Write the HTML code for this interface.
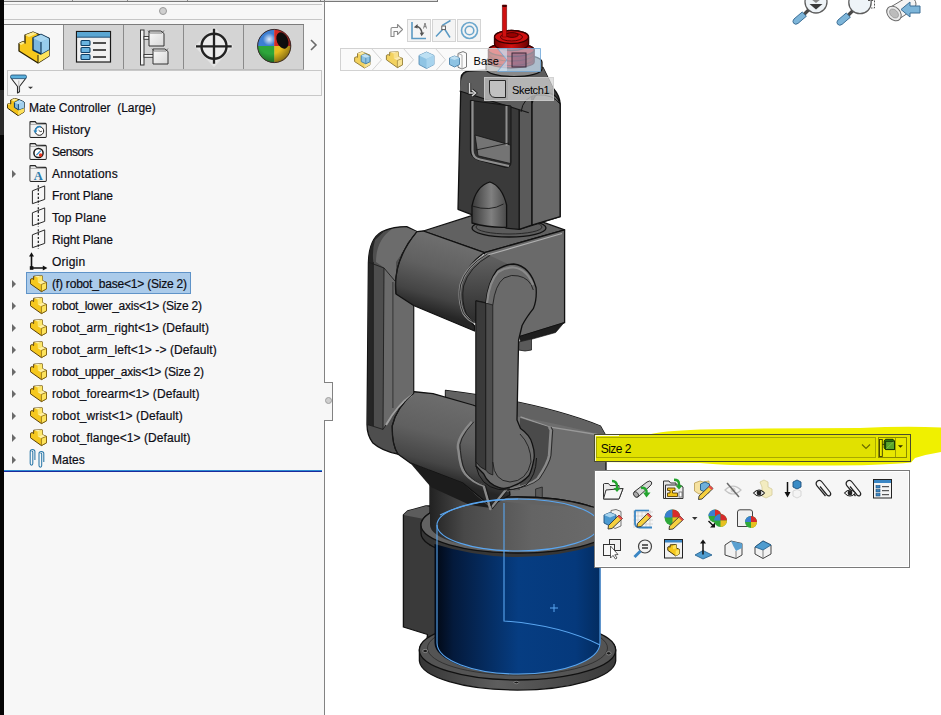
<!DOCTYPE html>
<html><head><meta charset="utf-8">
<style>
*{margin:0;padding:0;box-sizing:border-box}
html,body{width:941px;height:715px;overflow:hidden;background:#fff;font-family:"Liberation Sans",sans-serif}
.a{position:absolute}
#strip{left:0;top:0;width:4px;height:715px;background:#050505}
#panel{left:4px;top:0;width:320px;height:715px;background:#f7f7f7}
#vb{left:324px;top:0;width:1px;height:715px;background:#828282}
.row{position:absolute;left:0;height:22px;font-size:12px;color:#0c0c14;white-space:pre;line-height:22px;-webkit-text-stroke:0.2px #0c0c14}
.tx{position:absolute;top:0}
.exp{position:absolute;left:11px;top:7px;width:0;height:0;border-top:4px solid transparent;border-bottom:4px solid transparent;border-left:4px solid #6b6b6b}
.ico{position:absolute}
</style></head><body>
<div id="strip" class="a"></div>
<div class="a" style="left:0;top:90px;width:4px;height:45px;background:#2a2a2a"></div>
<div id="panel" class="a"></div>
<!-- top bars -->
<div class="a" style="left:4px;top:0;width:434px;height:1px;background:#e2e2e2"></div>
<div class="a" style="left:4px;top:1px;width:434px;height:1px;background:#787878"></div>
<div class="a" style="left:437px;top:0;width:1px;height:2px;background:#787878"></div>
<div class="a" style="left:72px;top:0;width:1px;height:1px;background:#888"></div>
<div class="a" style="left:127px;top:0;width:1px;height:1px;background:#888"></div>
<div class="a" style="left:187px;top:0;width:1px;height:1px;background:#888"></div>
<div class="a" style="left:320px;top:0;width:1px;height:1px;background:#888"></div>
<div class="a" style="left:4px;top:4px;width:318px;height:1px;background:#c6c6c6"></div>
<div class="a" style="left:4px;top:19px;width:318px;height:1px;background:#c6c6c6"></div>
<div class="a" style="left:159px;top:7px;width:8px;height:8px;border-radius:50%;background:#cfcfcf;border:1px solid #9a9a9a"></div>
<!-- tab row -->
<div class="a" style="left:4px;top:24px;width:300px;height:1px;background:#7c7c7c"></div>
<div class="a" style="left:63px;top:25px;width:241px;height:45px;background:#d4d4d4;border-left:1px solid #8a8a8a;border-right:1px solid #8a8a8a;border-bottom:1px solid #bdbdbd"></div>
<div class="a" style="left:123px;top:25px;width:1px;height:44px;background:#8a8a8a"></div>
<div class="a" style="left:183px;top:25px;width:1px;height:44px;background:#8a8a8a"></div>
<div class="a" style="left:243px;top:25px;width:1px;height:44px;background:#8a8a8a"></div>
<!-- chevron -->
<svg class="a" style="left:309px;top:38px" width="10" height="14"><path d="M2 2 L7 7 L2 12" fill="none" stroke="#6a6a6a" stroke-width="1.6"/></svg>
<!-- filter box -->
<div class="a" style="left:7px;top:70px;width:315px;height:26px;border:1px solid #c8c8c8;background:#f7f7f7"></div>

<!-- tree -->
<svg class="a" style="left:7px;top:98px" width="18" height="18" viewBox="0 0 18 18">
<path d="M3.7 2 L7.7 0.4 L12.4 1.8 L17 4 L17 14.1 L11.1 17.6 L0.4 10 L0.4 6.2 L2 5.3 L3.7 6 Z" fill="#f3c21a" stroke="#3a2a00" stroke-width="1" stroke-linejoin="round"/>
<path d="M11.1 12 L17 9.7 L17 14.1 L11.1 17.6 Z" fill="#fde05a"/>
<path d="M3.7 2 L7.7 0.4 L11 1.5 L7 3.2 Z M0.4 6.2 L2 5.3 L3.7 6 L2.2 6.8 Z" fill="#fdeb90"/>
<path d="M7.4 4.4 L12.4 2 L17 4 L17 9.7 L11.4 11.8 L7.4 9.4 Z" fill="#7db5dc" stroke="#0a3a66" stroke-width="1" stroke-linejoin="round"/>
<path d="M7.4 4.4 L12.4 2 L17 4 L11.4 6.2 Z" fill="#b5dcf2"/>
<path d="M11.4 6.2 L17 4 L17 9.7 L11.4 11.8 Z" fill="#a2d0ee"/>
<path d="M11.4 6.2 L11.4 11.8" stroke="#0a3a66" stroke-width="0.9"/>
</svg>
<div class="row" style="left:29px;top:97px;letter-spacing:-0.03px">Mate Controller  (Large)</div>
<svg class="a" style="left:29px;top:121px" width="18" height="18" viewBox="0 0 18 18"><path d="M1 3 L1 1.2 Q1 0.6 1.6 0.6 L6.2 0.6 L7.4 2.2 L16.4 2.4 Q17.2 2.5 17.2 3.3 L17.2 15.6 Q17.2 16.4 16.4 16.4 L1.8 16.4 Q1 16.4 1 15.6 Z" fill="#e9e9e9" stroke="#262626" stroke-width="1.1"/>
<path d="M1.6 3.6 L16.6 3.6" stroke="#9a9a9a" stroke-width="0.8"/>
<rect x="1.6" y="4" width="15" height="11.8" fill="#f2f2f2"/>
<circle cx="10.4" cy="10" r="4.3" fill="#fff" stroke="#1e1e1e" stroke-width="1"/>
<path d="M9.6 9.2 L11.2 10.6 L13 10.2" fill="none" stroke="#1e1e1e" stroke-width="0.8"/>
<path d="M6.5 10.5 A4.2 4.2 0 0 1 12 5.8" fill="none" stroke="#2a86c0" stroke-width="1.6"/>
<path d="M4.4 9.6 L8.4 9.6 L6.4 12.4 Z" fill="#2a86c0"/>
</svg>
<div class="row" style="left:52px;top:119px;letter-spacing:0.14px">History</div>
<svg class="a" style="left:29px;top:143px" width="18" height="18" viewBox="0 0 18 18"><path d="M1 3 L1 1.2 Q1 0.6 1.6 0.6 L6.2 0.6 L7.4 2.2 L16.4 2.4 Q17.2 2.5 17.2 3.3 L17.2 15.6 Q17.2 16.4 16.4 16.4 L1.8 16.4 Q1 16.4 1 15.6 Z" fill="#e9e9e9" stroke="#262626" stroke-width="1.1"/>
<path d="M1.6 3.6 L16.6 3.6" stroke="#9a9a9a" stroke-width="0.8"/>
<rect x="1.6" y="4" width="15" height="11.8" fill="#f2f2f2"/>
<circle cx="9.5" cy="10" r="4.6" fill="#fff" stroke="#151515" stroke-width="1.5"/>
<path d="M7.4 12.2 L11.8 7.6" stroke="#2a86c0" stroke-width="1.2"/>
<circle cx="11.6" cy="12.1" r="1.8" fill="#e8341c"/>
</svg>
<div class="row" style="left:52px;top:141px;letter-spacing:-0.46px">Sensors</div>
<svg class="a" style="left:11px;top:169px" width="6" height="10"><path d="M1 1 L5 5 L1 9 Z" fill="#6a6a6a"/></svg>
<svg class="a" style="left:29px;top:165px" width="18" height="18" viewBox="0 0 18 18"><path d="M1 3 L1 1.2 Q1 0.6 1.6 0.6 L6.2 0.6 L7.4 2.2 L16.4 2.4 Q17.2 2.5 17.2 3.3 L17.2 15.6 Q17.2 16.4 16.4 16.4 L1.8 16.4 Q1 16.4 1 15.6 Z" fill="#e9e9e9" stroke="#262626" stroke-width="1.1"/>
<path d="M1.6 3.6 L16.6 3.6" stroke="#9a9a9a" stroke-width="0.8"/>
<rect x="1.6" y="4" width="15" height="11.8" fill="#f2f2f2"/>
<text x="9.3" y="15.2" text-anchor="middle" font-family="Liberation Serif" font-weight="bold" font-size="12.5" fill="#2a7aaa">A</text>
</svg>
<div class="row" style="left:52px;top:163px;letter-spacing:0.24px">Annotations</div>
<svg class="a" style="left:29px;top:185px" width="19" height="21" viewBox="0 0 19 21">
<path d="M3.4 5.8 L15.7 0.9 L15.7 14.4 L3.4 18.7 Z" fill="#f6f6f6" stroke="#2a2a2a" stroke-width="1"/>
<path d="M9.3 0.3 L9.3 19.8" stroke="#1a1a1a" stroke-width="1.2" stroke-dasharray="2.2 1.6"/>
</svg>
<div class="row" style="left:52px;top:185px;letter-spacing:-0.1px">Front Plane</div>
<svg class="a" style="left:29px;top:207px" width="19" height="21" viewBox="0 0 19 21">
<path d="M3.4 5.8 L15.7 0.9 L15.7 14.4 L3.4 18.7 Z" fill="#f6f6f6" stroke="#2a2a2a" stroke-width="1"/>
<path d="M9.3 0.3 L9.3 19.8" stroke="#1a1a1a" stroke-width="1.2" stroke-dasharray="2.2 1.6"/>
</svg>
<div class="row" style="left:52px;top:207px;letter-spacing:0.09px">Top Plane</div>
<svg class="a" style="left:29px;top:229px" width="19" height="21" viewBox="0 0 19 21">
<path d="M3.4 5.8 L15.7 0.9 L15.7 14.4 L3.4 18.7 Z" fill="#f6f6f6" stroke="#2a2a2a" stroke-width="1"/>
<path d="M9.3 0.3 L9.3 19.8" stroke="#1a1a1a" stroke-width="1.2" stroke-dasharray="2.2 1.6"/>
</svg>
<div class="row" style="left:52px;top:229px;letter-spacing:-0.1px">Right Plane</div>
<svg class="a" style="left:29px;top:252px" width="20" height="20" viewBox="0 0 20 20">
<path d="M2.5 3.5 L2.5 16 L14.5 16" fill="none" stroke="#111" stroke-width="1.6"/>
<path d="M0 4.6 L2.5 0.2 L5 4.6 Z" fill="#111"/>
<path d="M13.8 13.4 L18.4 16 L13.8 18.6 Z" fill="#111"/>
<rect x="0.8" y="14.2" width="3.6" height="3.6" fill="#111"/>
</svg>
<div class="row" style="left:52px;top:251px;letter-spacing:0.23px">Origin</div>
<div class="a" style="left:26px;top:272px;width:165px;height:22px;background:#abcbea;border:1px solid #5f93c8"></div>
<svg class="a" style="left:11px;top:279px" width="6" height="10"><path d="M1 1 L5 5 L1 9 Z" fill="#6a6a6a"/></svg>
<svg class="a" style="left:30px;top:275px" width="18" height="18" viewBox="0 0 18 18">
<path d="M3.7 1.2 L12.2 0.8 L12.6 5.8 L16.5 7.4 L16.5 13.8 L11.4 16.6 L0.4 8.8 L0.4 4.4 L2.2 3.5 L3.6 4.6 Z" fill="#f6c81e" stroke="#5a3f05" stroke-width="1" stroke-linejoin="round"/>
<path d="M7.6 2.4 L12.2 0.8 L12.6 5.8 L7.8 7.3 Z" fill="#fde76a"/>
<path d="M3.7 1.2 L12.2 0.8 L7.6 2.4 Z" fill="#fff3a8"/>
<path d="M7.8 7.3 L12.6 5.8 L16.5 7.4 L11.4 9.4 Z" fill="#fff0a0"/>
<path d="M11.4 9.4 L16.5 7.4 L16.5 13.8 L11.4 16.6 Z" fill="#fde35c" stroke="#7a5a08" stroke-width="0.7"/>
</svg>
<div class="row" style="left:52px;top:273px;letter-spacing:-0.2px">(f) robot_base&lt;1&gt; (Size 2)</div>
<svg class="a" style="left:11px;top:301px" width="6" height="10"><path d="M1 1 L5 5 L1 9 Z" fill="#6a6a6a"/></svg>
<svg class="a" style="left:30px;top:297px" width="18" height="18" viewBox="0 0 18 18">
<path d="M3.7 1.2 L12.2 0.8 L12.6 5.8 L16.5 7.4 L16.5 13.8 L11.4 16.6 L0.4 8.8 L0.4 4.4 L2.2 3.5 L3.6 4.6 Z" fill="#f6c81e" stroke="#5a3f05" stroke-width="1" stroke-linejoin="round"/>
<path d="M7.6 2.4 L12.2 0.8 L12.6 5.8 L7.8 7.3 Z" fill="#fde76a"/>
<path d="M3.7 1.2 L12.2 0.8 L7.6 2.4 Z" fill="#fff3a8"/>
<path d="M7.8 7.3 L12.6 5.8 L16.5 7.4 L11.4 9.4 Z" fill="#fff0a0"/>
<path d="M11.4 9.4 L16.5 7.4 L16.5 13.8 L11.4 16.6 Z" fill="#fde35c" stroke="#7a5a08" stroke-width="0.7"/>
</svg>
<div class="row" style="left:52px;top:295px;letter-spacing:-0.23px">robot_lower_axis&lt;1&gt; (Size 2)</div>
<svg class="a" style="left:11px;top:323px" width="6" height="10"><path d="M1 1 L5 5 L1 9 Z" fill="#6a6a6a"/></svg>
<svg class="a" style="left:30px;top:319px" width="18" height="18" viewBox="0 0 18 18">
<path d="M3.7 1.2 L12.2 0.8 L12.6 5.8 L16.5 7.4 L16.5 13.8 L11.4 16.6 L0.4 8.8 L0.4 4.4 L2.2 3.5 L3.6 4.6 Z" fill="#f6c81e" stroke="#5a3f05" stroke-width="1" stroke-linejoin="round"/>
<path d="M7.6 2.4 L12.2 0.8 L12.6 5.8 L7.8 7.3 Z" fill="#fde76a"/>
<path d="M3.7 1.2 L12.2 0.8 L7.6 2.4 Z" fill="#fff3a8"/>
<path d="M7.8 7.3 L12.6 5.8 L16.5 7.4 L11.4 9.4 Z" fill="#fff0a0"/>
<path d="M11.4 9.4 L16.5 7.4 L16.5 13.8 L11.4 16.6 Z" fill="#fde35c" stroke="#7a5a08" stroke-width="0.7"/>
</svg>
<div class="row" style="left:52px;top:317px;letter-spacing:0.08px">robot_arm_right&lt;1&gt; (Default)</div>
<svg class="a" style="left:11px;top:345px" width="6" height="10"><path d="M1 1 L5 5 L1 9 Z" fill="#6a6a6a"/></svg>
<svg class="a" style="left:30px;top:341px" width="18" height="18" viewBox="0 0 18 18">
<path d="M3.7 1.2 L12.2 0.8 L12.6 5.8 L16.5 7.4 L16.5 13.8 L11.4 16.6 L0.4 8.8 L0.4 4.4 L2.2 3.5 L3.6 4.6 Z" fill="#f6c81e" stroke="#5a3f05" stroke-width="1" stroke-linejoin="round"/>
<path d="M7.6 2.4 L12.2 0.8 L12.6 5.8 L7.8 7.3 Z" fill="#fde76a"/>
<path d="M3.7 1.2 L12.2 0.8 L7.6 2.4 Z" fill="#fff3a8"/>
<path d="M7.8 7.3 L12.6 5.8 L16.5 7.4 L11.4 9.4 Z" fill="#fff0a0"/>
<path d="M11.4 9.4 L16.5 7.4 L16.5 13.8 L11.4 16.6 Z" fill="#fde35c" stroke="#7a5a08" stroke-width="0.7"/>
</svg>
<div class="row" style="left:52px;top:339px;letter-spacing:0.105px">robot_arm_left&lt;1&gt; -&gt; (Default)</div>
<svg class="a" style="left:11px;top:367px" width="6" height="10"><path d="M1 1 L5 5 L1 9 Z" fill="#6a6a6a"/></svg>
<svg class="a" style="left:30px;top:363px" width="18" height="18" viewBox="0 0 18 18">
<path d="M3.7 1.2 L12.2 0.8 L12.6 5.8 L16.5 7.4 L16.5 13.8 L11.4 16.6 L0.4 8.8 L0.4 4.4 L2.2 3.5 L3.6 4.6 Z" fill="#f6c81e" stroke="#5a3f05" stroke-width="1" stroke-linejoin="round"/>
<path d="M7.6 2.4 L12.2 0.8 L12.6 5.8 L7.8 7.3 Z" fill="#fde76a"/>
<path d="M3.7 1.2 L12.2 0.8 L7.6 2.4 Z" fill="#fff3a8"/>
<path d="M7.8 7.3 L12.6 5.8 L16.5 7.4 L11.4 9.4 Z" fill="#fff0a0"/>
<path d="M11.4 9.4 L16.5 7.4 L16.5 13.8 L11.4 16.6 Z" fill="#fde35c" stroke="#7a5a08" stroke-width="0.7"/>
</svg>
<div class="row" style="left:52px;top:361px;letter-spacing:-0.225px">robot_upper_axis&lt;1&gt; (Size 2)</div>
<svg class="a" style="left:11px;top:389px" width="6" height="10"><path d="M1 1 L5 5 L1 9 Z" fill="#6a6a6a"/></svg>
<svg class="a" style="left:30px;top:385px" width="18" height="18" viewBox="0 0 18 18">
<path d="M3.7 1.2 L12.2 0.8 L12.6 5.8 L16.5 7.4 L16.5 13.8 L11.4 16.6 L0.4 8.8 L0.4 4.4 L2.2 3.5 L3.6 4.6 Z" fill="#f6c81e" stroke="#5a3f05" stroke-width="1" stroke-linejoin="round"/>
<path d="M7.6 2.4 L12.2 0.8 L12.6 5.8 L7.8 7.3 Z" fill="#fde76a"/>
<path d="M3.7 1.2 L12.2 0.8 L7.6 2.4 Z" fill="#fff3a8"/>
<path d="M7.8 7.3 L12.6 5.8 L16.5 7.4 L11.4 9.4 Z" fill="#fff0a0"/>
<path d="M11.4 9.4 L16.5 7.4 L16.5 13.8 L11.4 16.6 Z" fill="#fde35c" stroke="#7a5a08" stroke-width="0.7"/>
</svg>
<div class="row" style="left:52px;top:383px;letter-spacing:0.085px">robot_forearm&lt;1&gt; (Default)</div>
<svg class="a" style="left:11px;top:411px" width="6" height="10"><path d="M1 1 L5 5 L1 9 Z" fill="#6a6a6a"/></svg>
<svg class="a" style="left:30px;top:407px" width="18" height="18" viewBox="0 0 18 18">
<path d="M3.7 1.2 L12.2 0.8 L12.6 5.8 L16.5 7.4 L16.5 13.8 L11.4 16.6 L0.4 8.8 L0.4 4.4 L2.2 3.5 L3.6 4.6 Z" fill="#f6c81e" stroke="#5a3f05" stroke-width="1" stroke-linejoin="round"/>
<path d="M7.6 2.4 L12.2 0.8 L12.6 5.8 L7.8 7.3 Z" fill="#fde76a"/>
<path d="M3.7 1.2 L12.2 0.8 L7.6 2.4 Z" fill="#fff3a8"/>
<path d="M7.8 7.3 L12.6 5.8 L16.5 7.4 L11.4 9.4 Z" fill="#fff0a0"/>
<path d="M11.4 9.4 L16.5 7.4 L16.5 13.8 L11.4 16.6 Z" fill="#fde35c" stroke="#7a5a08" stroke-width="0.7"/>
</svg>
<div class="row" style="left:52px;top:405px;letter-spacing:0.09px">robot_wrist&lt;1&gt; (Default)</div>
<svg class="a" style="left:11px;top:433px" width="6" height="10"><path d="M1 1 L5 5 L1 9 Z" fill="#6a6a6a"/></svg>
<svg class="a" style="left:30px;top:429px" width="18" height="18" viewBox="0 0 18 18">
<path d="M3.7 1.2 L12.2 0.8 L12.6 5.8 L16.5 7.4 L16.5 13.8 L11.4 16.6 L0.4 8.8 L0.4 4.4 L2.2 3.5 L3.6 4.6 Z" fill="#f6c81e" stroke="#5a3f05" stroke-width="1" stroke-linejoin="round"/>
<path d="M7.6 2.4 L12.2 0.8 L12.6 5.8 L7.8 7.3 Z" fill="#fde76a"/>
<path d="M3.7 1.2 L12.2 0.8 L7.6 2.4 Z" fill="#fff3a8"/>
<path d="M7.8 7.3 L12.6 5.8 L16.5 7.4 L11.4 9.4 Z" fill="#fff0a0"/>
<path d="M11.4 9.4 L16.5 7.4 L16.5 13.8 L11.4 16.6 Z" fill="#fde35c" stroke="#7a5a08" stroke-width="0.7"/>
</svg>
<div class="row" style="left:52px;top:427px;letter-spacing:0.076px">robot_flange&lt;1&gt; (Default)</div>
<svg class="a" style="left:11px;top:455px" width="6" height="10"><path d="M1 1 L5 5 L1 9 Z" fill="#6a6a6a"/></svg>
<svg class="a" style="left:29px;top:449px" width="18" height="20" viewBox="0 0 18 20">
<g fill="none" stroke="#2a77a8" stroke-width="1.05">
<path d="M5.9 11 L5.9 2.6 Q5.9 0.6 3.6 0.6 Q1.2 0.6 1.2 2.6 L1.2 14.6 Q1.2 16.2 2.6 16.2 Q3.8 16.2 3.8 14.6 L3.8 3.2 Q3.8 2.2 2.7 2.6"/>
<path d="M14.8 13 L14.8 4.6 Q14.8 2.6 12.4 2.6 Q10 2.6 10 4.6 L10 16.6 Q10 18.2 11.4 18.2 Q12.7 18.2 12.7 16.6 L12.7 5.2 Q12.7 4.2 11.6 4.6"/>
</g></svg>
<div class="row" style="left:52px;top:449px;letter-spacing:0px">Mates</div>
<svg class="a" style="left:0;top:0" width="325" height="100" viewBox="0 0 325 100">
<defs>
<radialGradient id="gBall" cx="0.35" cy="0.3" r="0.75">
<stop offset="0" stop-color="#fff" stop-opacity="0.85"/><stop offset="0.25" stop-color="#fff" stop-opacity="0"/>
</radialGradient>
<linearGradient id="gBox" x1="0" y1="0" x2="1" y2="1"><stop offset="0" stop-color="#fafafa"/><stop offset="1" stop-color="#d8d8d8"/></linearGradient>
</defs>
<!-- tab1: assembly feature manager -->
<g transform="translate(18,31)" stroke-linejoin="round">
<path d="M7 4 L15 1 L31 7.5 L31 25 L20 32 L1 20 L1 12.5 L5 10.5 L7 12 Z" fill="#f7c81c" stroke="#2a2000" stroke-width="1.3"/>
<path d="M20 24 L31 18.5 L31 25 L20 32 Z" fill="#fde35a"/>
<path d="M7 4 L15 1 L19 2.6 L11 6 Z" fill="#fdeb8a"/>
<path d="M1 12.5 L5 10.5 L7 12 L3 14 Z" fill="#fdeb8a"/>
<path d="M20 24 L20 32" stroke="#2a2000" stroke-width="1"/>
<path d="M15 7 L23 3.5 L31 7.5 L31 18.5 L23 23 L15 19 Z" fill="#7db7de" stroke="#0a3050" stroke-width="1.4"/>
<path d="M15 7 L23 3.5 L31 7.5 L23 11 Z" fill="#a9d6f0"/>
<path d="M23 11 L31 7.5 L31 18.5 L23 23 Z" fill="#98cdec"/>
<path d="M23 11 L23 23" stroke="#0a3050" stroke-width="1.1"/>
</g>
<!-- tab2: property manager -->
<g transform="translate(76,31)">
<rect x="0.5" y="0.5" width="34" height="30.5" fill="#f0f0f0" stroke="#1a1a1a" stroke-width="1.2"/>
<rect x="1" y="1" width="33" height="5" fill="#5aa6d2"/>
<path d="M1 6.2 L34 6.2" stroke="#1a4a70" stroke-width="1"/>
<rect x="5" y="9.5" width="9" height="5" rx="1" fill="#6ab4e0" stroke="#0e3f66" stroke-width="1.1"/>
<rect x="5" y="16.5" width="9" height="5" rx="1" fill="#6ab4e0" stroke="#0e3f66" stroke-width="1.1"/>
<rect x="5" y="23.5" width="9" height="5" rx="1" fill="#6ab4e0" stroke="#0e3f66" stroke-width="1.1"/>
<path d="M17 12 L30 12 M17 19 L30 19 M17 26 L30 26" stroke="#1a1a1a" stroke-width="1.6"/>
</g>
<!-- tab3: configuration manager -->
<g transform="translate(140,29.5)">
<rect x="0.5" y="0.5" width="3.5" height="35" fill="#f4f4f4" stroke="#333" stroke-width="1"/>
<rect x="4" y="7" width="5" height="2.8" fill="#f4f4f4" stroke="#333" stroke-width="0.9"/>
<rect x="4" y="25" width="10" height="2.8" fill="#f4f4f4" stroke="#333" stroke-width="0.9"/>
<path d="M9 1.5 L21 1.5 L24 4 L24 16.5 L9 16.5 Z" fill="url(#gBox)" stroke="#333" stroke-width="1"/>
<path d="M8 1 L10 3.5 L22 3.5 L24 1" fill="none" stroke="#333" stroke-width="0.6"/>
<path d="M13 19.5 L25 19.5 L28 22 L28 34.5 L13 34.5 Z" fill="url(#gBox)" stroke="#333" stroke-width="1"/>
<path d="M12 19 L14 21.5 L26 21.5 L28 19" fill="none" stroke="#333" stroke-width="0.6"/>
</g>
<!-- tab4: dimxpert crosshair -->
<g transform="translate(214,46.3)">
<path d="M0 -19.5 L19.5 0 L0 21 L-19.5 0 Z" fill="#e4e4e4"/>
<path d="M0 -17 L17 0 L0 18.5 L-17 0 Z" fill="#ebebeb"/>
<circle r="12.5" fill="#ececec" stroke="#222" stroke-width="2.4"/>
<path d="M-18 0 L17.7 0 M0 -17.5 L0 17.5" stroke="#222" stroke-width="2.3"/>
</g>
<!-- tab5: display manager ball -->
<defs>
<radialGradient id="gShade" cx="0.4" cy="0.35" r="0.7">
<stop offset="0.55" stop-color="#000" stop-opacity="0"/><stop offset="1" stop-color="#000" stop-opacity="0.45"/>
</radialGradient>
</defs>
<g transform="translate(274.2,46)">
<path d="M0 0 L-16.8 0 A16.8 16.8 0 0 1 0 -16.8 Z" fill="#3d7fd2"/>
<path d="M0 0 L0 -16.8 A16.8 16.8 0 0 1 16.8 0 Z" fill="#d42a24"/>
<path d="M0 0 L16.8 0 A16.8 16.8 0 0 1 0 16.8 Z" fill="#e6bc1e"/>
<path d="M0 0 L-16.8 0 A16.8 16.8 0 0 0 0 16.8 Z" fill="#2ea63a"/>
<ellipse cx="8.2" cy="-5.5" rx="5.6" ry="8.6" transform="rotate(-22 8.2 -5.5)" fill="#0e0e0e"/>
<circle r="16.8" fill="url(#gShade)"/>
<circle r="16.8" fill="url(#gBall)"/>
<circle r="16.6" fill="none" stroke="#3a2a2a" stroke-width="1"/>
</g>
<!-- filter -->
<g transform="translate(10,74.5)">
<path d="M1 3.5 L7.5 12 L7.5 18.5 L9.5 17.2 L9.5 12 L16 3.5" fill="#f4f4f4" stroke="#2a2a2a" stroke-width="1.1" stroke-linejoin="round"/>
<path d="M8.8 6 L8.8 16" stroke="#b8b8b8" stroke-width="1"/>
<rect x="0.5" y="0.5" width="16" height="3.6" rx="1.6" fill="#5ab0dc" stroke="#1a4a70" stroke-width="0.8"/>
<path d="M18 12.2 L23 12.2 L20.5 14.6 Z" fill="#3a3a3a"/>
</g>
</svg>


<!-- bottom line -->
<div class="a" style="left:4px;top:470px;width:318px;height:1px;background:#2f8ad2"></div>
<div class="a" style="left:4px;top:471px;width:318px;height:1px;background:#1c2a9c"></div>

<div id="vb" class="a"></div>
<!-- splitter handle -->
<div class="a" style="left:324px;top:382px;width:9px;height:39px;background:#f7f7f7;border:1px solid #828282;border-left:none"></div>
<div class="a" style="left:325px;top:397px;width:7px;height:7px;border-radius:50%;background:#cfcfcf;border:1px solid #a0a0a0"></div>

<svg class="a" style="left:0;top:0" width="941" height="715" viewBox="0 0 941 715">
<defs>
<linearGradient id="gBlue" x1="437" y1="0" x2="600" y2="0" gradientUnits="userSpaceOnUse">
 <stop offset="0" stop-color="#020a18"/><stop offset="0.1" stop-color="#041a3c"/><stop offset="0.5" stop-color="#063d82"/><stop offset="0.85" stop-color="#05397c"/><stop offset="1" stop-color="#032c60"/>
</linearGradient>
<linearGradient id="gCol" x1="430" y1="0" x2="600" y2="0" gradientUnits="userSpaceOnUse">
 <stop offset="0" stop-color="#222"/><stop offset="0.2" stop-color="#484848"/><stop offset="0.6" stop-color="#646464"/><stop offset="1" stop-color="#6a6a6a"/>
</linearGradient>
<linearGradient id="gUpHub" x1="445" y1="240" x2="425" y2="310" gradientUnits="userSpaceOnUse">
 <stop offset="0" stop-color="#6e6e6e"/><stop offset="0.4" stop-color="#606060"/><stop offset="0.78" stop-color="#444"/><stop offset="1" stop-color="#262626"/>
</linearGradient>
<linearGradient id="gLoHub" x1="440" y1="398" x2="420" y2="475" gradientUnits="userSpaceOnUse">
 <stop offset="0" stop-color="#6c6c6c"/><stop offset="0.45" stop-color="#606060"/><stop offset="0.8" stop-color="#464646"/><stop offset="1" stop-color="#262626"/>
</linearGradient>
<linearGradient id="gFl" x1="419" y1="0" x2="616" y2="0" gradientUnits="userSpaceOnUse">
 <stop offset="0" stop-color="#353535"/><stop offset="0.4" stop-color="#5e5e5e"/><stop offset="1" stop-color="#3a3a3a"/>
</linearGradient>
<linearGradient id="gNose" x1="472" y1="0" x2="507" y2="0" gradientUnits="userSpaceOnUse">
 <stop offset="0" stop-color="#3a3a3a"/><stop offset="0.55" stop-color="#808080"/><stop offset="1" stop-color="#484848"/>
</linearGradient>
<linearGradient id="gRed" x1="0" y1="0" x2="1" y2="0">
 <stop offset="0" stop-color="#7a0000"/><stop offset="0.5" stop-color="#d01010"/><stop offset="1" stop-color="#6a0000"/>
</linearGradient>
<linearGradient id="gArmL" x1="368" y1="0" x2="414" y2="0" gradientUnits="userSpaceOnUse">
 <stop offset="0" stop-color="#383838"/><stop offset="0.3" stop-color="#505050"/><stop offset="1" stop-color="#5a5a5a"/>
</linearGradient>
<linearGradient id="gEnd" x1="470" y1="260" x2="470" y2="325" gradientUnits="userSpaceOnUse">
 <stop offset="0" stop-color="#5e5e5e"/><stop offset="1" stop-color="#2a2a2a"/>
</linearGradient>
</defs>
<g stroke="#111" stroke-width="1.3" stroke-linejoin="round">
<!-- L1 left block -->
<path d="M403.4 515 L407.6 511 L426 506 L470 506 L470 645 L426.4 645 L427.5 634.5 L403.4 627 Z" fill="#3a3a3a"/>
<path d="M403.4 515 L407.6 511 L426 506 L446 511 L424 519 Z" fill="#5c5c5c" stroke="none"/>
<!-- L2 flange -->
<path d="M419.4 650 A98.2 30 0 0 1 615.7 650 L615.7 661 A98.2 30 0 0 1 419.4 661 Z" fill="url(#gFl)"/>
<ellipse cx="517.5" cy="650" rx="98.2" ry="30" fill="#545454"/>
<ellipse cx="517.5" cy="648" rx="90" ry="27" fill="none" stroke="#2a2a2a" stroke-width="0.8"/>
<ellipse cx="425.2" cy="651" rx="2.4" ry="1.6" fill="#1a1a1a" stroke="#aaa" stroke-width="0.6"/>
<ellipse cx="608.7" cy="653.3" rx="2.4" ry="1.6" fill="#1a1a1a" stroke="#aaa" stroke-width="0.6"/>
<ellipse cx="516.4" cy="682.5" rx="2.4" ry="1.2" fill="#1a1a1a" stroke="#aaa" stroke-width="0.6"/>
<!-- L3 column back -->
<path d="M430 440 L606 440 L606 545 L430 545 Z" fill="url(#gCol)" stroke="none"/>
<!-- L5 shoulder housing -->
<path d="M445.5 390.5 Q540 402 600.4 426 L606 436 L606 545 L430 545 L430 480 L445 470 Z" fill="#6e6e6e"/>
<path d="M445.5 390.5 Q540 402 600.4 426 L606 436 Q560 424 520 417 L446 404 Z" fill="#626262" stroke="none"/>
<path d="M520.5 416.8 L549 426.9 L606 436" fill="none" stroke="#999" stroke-width="1.4"/>
<path d="M535.6 489 L542.3 487 L542.3 545 L535.6 545 Z" fill="#5a5a5a" stroke="#222" stroke-width="0.8"/>
<!-- shoulder ring -->
<path d="M421 525 A97 28 0 0 1 615 525 L615 533 A97 28 0 0 1 421 533 Z" fill="#363636"/>
<ellipse cx="518" cy="525" rx="97" ry="28" fill="#626262"/>
<path d="M430 520 L430 485 Q470 500 540 505 L600 508 L600 525 A82 24 0 0 1 430 525 Z" fill="url(#gCol)" stroke="none"/>
<!-- L4 blue cylinder -->
<path d="M434.5 544 Q518 570 600.6 544 L600.6 643 A83 31 0 0 1 434.5 643 Z" fill="url(#gBlue)" stroke="none"/>
<!-- L6 lower hub -->
<path d="M412 391.5 L433 393.6 L472.8 405 L500 415 L510 495 L490.6 505.8 L462.3 482.8 L410 462.8 L397.8 454 Q391 445 391.2 426 Q394 405 412 391.5 Z" fill="url(#gLoHub)"/>

<path d="M410 462.8 L462.3 482.8 L490.6 508 L470 505 L430.8 487 Z" fill="#1c1c1c" stroke="none"/>
<!-- lower ring right part -->
<path d="M505.4 490.6 Q530 485 537.3 479 Q549 462 549 455.4 L550.7 430.2 L549 426.9 L520 418 L520 490 Z" fill="#4a4a4a" stroke="none"/>
<path d="M471.8 421.8 Q455 440 458.4 450.4 Q460 468 465.1 473.8 Q472 482 483.6 485.6 L490.3 509 L505.4 490.6 Q528 487 537.3 479 Q548 463 549 455.4 L550.7 430.2 L549 426.9" fill="none" stroke="#8a8a8a" stroke-width="2.4"/>
<path d="M471.8 421.8 Q455 440 458.4 450.4 Q460 468 465.1 473.8 Q472 482 483.6 485.6 L490.3 509 L505.4 490.6 Q528 487 537.3 479 Q548 463 549 455.4 L550.7 430.2 L549 426.9" fill="none" stroke="#161616" stroke-width="0.8" transform="translate(2,0)"/>
<!-- L7 left arm -->
<path d="M368.4 263 Q369 236 385 230.4 Q393 226.8 406.7 226.6 L416.9 231.7 L413.6 305.5 L413.6 393 Q396 408 392.2 426 Q392 445 397.8 454 Q382 451 372.6 442.7 Q367 435 367 424.5 Z" fill="#4e4e4e"/>
<path d="M368.4 263 Q369 236 385 230.4 L375 240 Q372 250 373.3 262 L373.3 426 L367.5 425 Z" fill="#262626" stroke="none"/>
<path d="M376 262 Q376 240 392 229 Q400 227 406.7 227.5 L416.9 231.7 L396 262 L396 290 L384.5 268 Z" fill="#6c6c6c" stroke="none"/>
<path d="M384 268 L413.6 303 L413.6 393.8 Q396 408 383 429.4 Z" fill="#6a6a6a" stroke="#1e1e1e" stroke-width="0.9"/>
<path d="M392.9 282 L392.9 408" fill="none" stroke="#262626" stroke-width="0.8"/>
<path d="M373.3 262 L373.3 426 M368 262 L384 268 M367.5 424.5 L383 429.4" fill="none" stroke="#1e1e1e" stroke-width="0.9"/>
<path d="M412 395 Q398 404 386 425" fill="none" stroke="#a0a0a0" stroke-width="2"/>
<path d="M414 393 Q396 408 392.2 426 Q392 445 397.8 454" fill="none" stroke="#1a1a1a" stroke-width="1"/>
<!-- L8 forearm block -->
<path d="M423.3 231 L471.7 215.7 L503.6 208 L564.6 229.9 L484.5 252.7 Z" fill="#616161"/>
<path d="M484.5 252.7 L564.6 229.9 L564.6 322.7 L519.3 336.7 L484.5 348 Z" fill="#6a6a6a"/>
<path d="M486 255.5 L562 233.5" stroke="#b0b0b0" stroke-width="1.1" fill="none"/>
<path d="M519.3 336.7 L564 322.7 L555.7 332.5 L520.7 342.3 Z" fill="#1e1e1e" stroke="#111" stroke-width="0.6"/>
<path d="M518.6 342 L531.5 339 L531.5 350 Q525 352 518.6 350 Z" fill="#5a5a5a" stroke="#222" stroke-width="0.8"/>
<!-- upper hub cylinder -->
<path d="M416.9 231.7 L423.3 231 L484.5 252.7 Q470 262 462 280 Q458 300 463.4 313 L474.6 326 L474.6 331 L413.6 305.5 L396 294 Q392 262 416.9 231.7 Z" fill="url(#gUpHub)"/>
<path d="M416.9 231.7 Q398 252 395.5 280 L396 294" fill="none" stroke="#1a1a1a" stroke-width="1"/>
<!-- hub end face inside ring -->
<path d="M487.2 254.2 Q466 266 460.6 285 Q458 300 463.4 313 Q468 320 476 323 L476 301 L486 303 Q490 272 510 265 Z" fill="url(#gEnd)" stroke="none"/>
<path d="M487.2 254.2 Q466 266 460.6 285 Q458 300 463.4 313 Q468 320 474.6 322.7" fill="none" stroke="#8e8e8e" stroke-width="2.6"/>
<path d="M487.2 254.2 Q466 266 460.6 285 Q458 300 463.4 313 Q468 320 474.6 322.7" fill="none" stroke="#141414" stroke-width="0.8" transform="translate(3,1)"/>
<path d="M487.2 254.2 Q466 266 460.6 285 Q458 300 463.4 313 Q468 320 474.6 322.7" fill="none" stroke="#141414" stroke-width="0.8"/>
<!-- L9 right arm -->
<path d="M476 301 L485.8 303 Q488 282 497 270 Q505 264 513.7 264 Q530 266 536.1 287.8 Q537 300 533.3 308.7 Q526 318 522.1 325.5 L518.6 340 L517 420 L520.5 428.5 Q530 435 532.2 443.6 Q535 452 534 458.7 Q532 470 529 475.5 Q522 483 513.8 485.6 Q505 490 498.7 487.3 Q488 484 483.6 473.8 L476 466 Z" fill="#6a6a6a"/>
<path d="M476 301 L485.8 303 L485.8 470 Q480 468 476 462 Z" fill="#3a3a3a" stroke="#141414" stroke-width="0.8"/>
<path d="M485.8 303 L492.8 305 L492.8 475 Q488 474 485.8 470 Z" fill="#4c4c4c" stroke="#141414" stroke-width="0.7"/>
<path d="M492.8 305 Q495 285 504 278 Q512 274 518 275.9 Q530 278 533.3 290" fill="none" stroke="#141414" stroke-width="0.8"/>
<path d="M487 303 Q489 282 498 272 Q506 267 513.7 267.5 Q527 269 533 285" fill="none" stroke="#8a8a8a" stroke-width="2.2"/>
<path d="M492.8 462 Q494 481 510 482 Q527 481 531 462 Q531 445 520 434" fill="none" stroke="#141414" stroke-width="0.8"/>
<path d="M476 466 Q480 486 498.7 489.5 Q515 491 526 485 Q536 476 536.5 458" fill="none" stroke="#141414" stroke-width="1"/>
<!-- nose ring -->
<ellipse cx="509" cy="228" rx="37" ry="9" fill="#5c5c5c"/>
<ellipse cx="509" cy="227" rx="33" ry="7" fill="none" stroke="#1a1a1a" stroke-width="0.8"/>
<!-- L10 wrist -->
<path d="M461 78 Q462 71 470 71 L543 67.5 L553 88 Q560 96 560.1 104 L560.1 216.7 L519.2 229.3 L506.6 228.2 L458 209.3 Z" fill="#3a3a3a"/>
<path d="M531.8 104 Q534 92 545 92 Q558 94 560.1 104 L560.1 216.7 L531.8 225 Z" fill="#686868"/>
<path d="M519.2 100 Q521 92 531.8 92 L531.8 225 L519.2 229.3 Z" fill="#5a5a5a"/>
<path d="M460 91 Q460 74 468 72 L543 67.5 L553 88 Q548 92 540 93 Q524 96 521 109.6 L528.8 112.7 Z" fill="#5c5c5c" stroke="none"/>
<path d="M459.6 91 L528.8 112.7" fill="none" stroke="#141414" stroke-width="1.1"/>
<path d="M521 112 Q523 97 537 95 Q553 94 560 104" fill="none" stroke="#141414" stroke-width="1"/>
<path d="M470.4 100.4 L511 106 L511 162 Q511 168 505 167.3 L478 160 Q470.4 157 470.4 150 Z" fill="#2e2e2e" stroke="#141414" stroke-width="1"/>
<path d="M475 135 L510.4 145 L510.4 163.5 L478 155.8 Z" fill="#747474" stroke="#141414" stroke-width="0.8"/>
<path d="M472.5 101 L472.5 150 Q472.5 158 480 159.5 L509 166" fill="none" stroke="#8e8e8e" stroke-width="2.2"/>
<path d="M506.5 106 L506.5 146" fill="none" stroke="#8e8e8e" stroke-width="2"/>
<path d="M476 150 L509 143" fill="none" stroke="#141414" stroke-width="0.8"/>
<!-- nose ring + cone -->
<path d="M472 223 L472 206 Q476 186 489.9 182 Q502 186 506.6 205 L506.6 227.2 Q490 228 472 223 Z" fill="url(#gNose)"/>
<path d="M472 206 Q490 212 503.5 204" fill="none" stroke="#1a1a1a" stroke-width="0.9"/>
<!-- L11 red flange -->
<path d="M486 62 A28 8 0 0 1 542 62 L542 69 A28 7.5 0 0 1 486 69 Z" fill="#8a8a8a" stroke="#111" stroke-width="1.2"/>
<path d="M488.4 50 A22.9 7 0 0 1 534.2 50 L534.2 62 A22.9 6 0 0 1 488.4 62 Z" fill="url(#gRed)" stroke="#3a0000"/>
<path d="M488.6 55 A22.9 7 0 0 0 534 55 M488.6 59.5 A22.9 7 0 0 0 534 59.5" fill="none" stroke="#4a0000" stroke-width="1"/>
<ellipse cx="511.3" cy="50" rx="22.9" ry="6.5" fill="#c80c0c" stroke="#3a0000"/>
<path d="M494.5 37 A17 6.5 0 0 1 528.6 37 L528.6 44 A17 6.5 0 0 1 494.5 44 Z" fill="url(#gRed)" stroke="#3a0000"/>
<ellipse cx="511.5" cy="37" rx="17" ry="6.5" fill="#d01010" stroke="#3a0000"/>
<ellipse cx="511.5" cy="37" rx="11" ry="4" fill="none" stroke="#4a0000" stroke-width="0.9"/>
<ellipse cx="512" cy="35" rx="6.3" ry="2.4" fill="#9a0000" stroke="#3a0000" stroke-width="0.8"/>
<rect x="502.4" y="5" width="4.2" height="32" fill="#d01010" stroke="#6a0000" stroke-width="0.6"/>
<rect x="502.4" y="5" width="4.2" height="2" fill="#400" stroke="none"/>
</g>
<!-- sketch lines -->
<g fill="none" stroke="#5aa6f0" stroke-width="1.1">
<ellipse cx="518" cy="525" rx="81" ry="26"/>
<path d="M437 525 L437 643 A81.5 31 0 0 0 600 643 L600 525"/>
<path d="M504 503 L504 621 Q560 625 600 645"/>
<path d="M440 515 Q470 500 518 499"/>
</g>
<path d="M550 608 L558 608 M554 604 L554 612" stroke="#5aa6f0" stroke-width="1"/>
</svg>

<!-- context toolbar -->
<svg class="a" style="left:388px;top:22px" width="16" height="16" viewBox="0 0 16 16">
<path d="M3 14.5 L3 7 Q3 5.5 4.5 5.5 L9.5 5.5 L9.5 2.5 L14.5 7.5 L9.5 12.5 L9.5 9.5 L6 9.5 L6 14.5 Z" fill="#fafafa" stroke="#8a8a8a" stroke-width="1.1" stroke-linejoin="round"/>
</svg>
<div class="a" style="left:407px;top:19px;width:24px;height:23px;border:1px solid #d4d4d4;background:#f4f4f4"></div>
<div class="a" style="left:432px;top:19px;width:24px;height:23px;border:1px solid #d4d4d4;background:#f4f4f4"></div>
<div class="a" style="left:457px;top:19px;width:24px;height:23px;border:1px solid #d4d4d4;background:#f4f4f4"></div>
<svg class="a" style="left:407px;top:19px" width="75" height="23" viewBox="0 0 75 23">
<path d="M5 3 L5 19.5 L19 19.5" fill="none" stroke="#5b9ac4" stroke-width="1.6"/>
<path d="M9 7 Q14 8 15 14" fill="none" stroke="#555" stroke-width="1.5"/>
<path d="M6.8 8.2 L10.6 5 L10.6 9.6 Z M12.8 13.8 L17.4 13.4 L14.6 17.2 Z" fill="#555"/>
<path d="M16.5 9.5 L18 4 L19.5 9.5 M17 7.6 L19 7.6" fill="none" stroke="#777" stroke-width="0.9"/>
<path d="M29 17.5 L37 9 L43 18.5 M35.3 6.3 L43.5 1.5" fill="none" stroke="#5b9ac4" stroke-width="1.5"/>
<rect x="34.8" y="7" width="3.6" height="3.6" fill="#fff" stroke="#555" stroke-width="0.9"/>
<circle cx="62.5" cy="11.5" r="8" fill="none" stroke="#6aa6cc" stroke-width="1.6"/>
<circle cx="62.5" cy="11.5" r="4.3" fill="none" stroke="#6aa6cc" stroke-width="1.6"/>
</svg>
<!-- breadcrumb -->
<div class="a" style="left:340px;top:48px;width:167px;height:23px;border:1px solid rgba(200,200,200,0.8);border-right:none;background:rgba(246,246,246,0.6)"></div>
<svg class="a" style="left:340px;top:48px" width="205" height="25" viewBox="0 0 205 25">
<path d="M31.5 0.5 L41.5 11.8 L31.5 23" fill="none" stroke="#d4d4d4" stroke-width="1"/>
<path d="M63.5 0.5 L73.5 11.8 L63.5 23" fill="none" stroke="#d4d4d4" stroke-width="1"/>
<path d="M95.5 0.5 L105.5 11.8 L95.5 23" fill="none" stroke="#d4d4d4" stroke-width="1"/>
<!-- asm icon -->
<g transform="translate(14,3)">
<path d="M3.5 2.5 L8 0.8 L16 4.2 L16 13.8 L10.5 17 L0.6 10.6 L0.6 6.6 L2.4 5.8 L3.5 6.4 Z" fill="#f3d25e" stroke="#8a7430" stroke-width="0.9" stroke-linejoin="round"/>
<path d="M10.5 12.5 L16 9.8 L16 13.8 L10.5 17 Z" fill="#f9e392"/>
<path d="M3.5 2.5 L8 0.8 L11 2 L6.5 3.8 Z" fill="#fbeaa8"/>
<path d="M7.2 4.6 L11.2 3 L16 5.2 L16 10.8 L11.8 12.8 L7.2 10.6 Z" fill="#8cc2e2" stroke="#3f7aa6" stroke-width="0.9" stroke-linejoin="round"/>
<path d="M7.2 4.6 L11.2 3 L16 5.2 L11.8 6.8 Z" fill="#c3e2f3"/>
<path d="M11.8 6.8 L11.8 12.8" stroke="#3f7aa6" stroke-width="0.7"/>
</g>
<g transform="translate(46,3)">
<path d="M3.7 1.2 L12.2 0.8 L12.6 5.8 L16.5 7.4 L16.5 13.8 L11.4 16.6 L0.4 8.8 L0.4 4.4 L2.2 3.5 L3.6 4.6 Z" fill="#f3d25e" stroke="#8a7430" stroke-width="0.9" stroke-linejoin="round"/>
<path d="M7.6 2.4 L12.2 0.8 L12.6 5.8 L7.8 7.3 Z" fill="#f8e08a"/>
<path d="M3.7 1.2 L12.2 0.8 L7.6 2.4 Z M7.8 7.3 L12.6 5.8 L16.5 7.4 L11.4 9.4 Z" fill="#fbeab0"/>
<path d="M11.4 9.4 L16.5 7.4 L16.5 13.8 L11.4 16.6 Z" fill="#f8e392" stroke="#8a7430" stroke-width="0.6"/>
</g>
<g transform="translate(78,3)">
<path d="M1 4.5 L8.5 1 L16 4.5 L16 13.5 L8.5 17.5 L1 13.5 Z" fill="#8fc4e4" stroke="#5a8fb5" stroke-width="0.9" stroke-linejoin="round"/>
<path d="M1 4.5 L8.5 1 L16 4.5 L8.5 8 Z" fill="#bde0f3"/>
<path d="M8.5 8 L16 4.5 L16 13.5 L8.5 17.5 Z" fill="#a8d4ee"/>
</g>
<g transform="translate(108,3)">
<path d="M10 2.5 L15 0.6 L18.5 2.2 L18.5 16 L14 18 L10 16.2 Z" fill="#fbfbfb" stroke="#6a6a6a" stroke-width="0.9" stroke-linejoin="round"/>
<path d="M10 2.5 L14 4 L14 18" fill="none" stroke="#9a9a9a" stroke-width="0.8"/>
<path d="M1.5 7 L6.5 5 L11.5 7 L11.5 13.5 L6.5 16 L1.5 13.5 Z" fill="#8ec3e3" stroke="#4a80a8" stroke-width="0.9" stroke-linejoin="round"/>
<path d="M1.5 7 L6.5 5 L11.5 7 L6.5 9 Z" fill="#c0e0f2"/>
</g>
</svg>
<div class="a" style="left:473.5px;top:55px;font-size:11px;color:#000;letter-spacing:0.1px">Base</div>
<!-- highlighted crumb -->
<svg class="a" style="left:496px;top:47px" width="47" height="26" viewBox="0 0 47 26">
<path d="M1.5 1.5 L44.5 1.5 L44.5 24.5 L1.5 24.5 L11 13 Z" fill="rgba(195,222,245,0.62)" stroke="rgba(110,165,215,0.8)" stroke-width="1"/>
<rect x="16" y="6" width="14" height="14" fill="rgba(110,70,110,0.35)" stroke="#3a2838" stroke-width="1"/>
</svg>
<!-- sketch1 -->
<div class="a" style="left:484px;top:77px;width:70px;height:24px;background:rgba(215,215,215,0.72);border:1px solid rgba(205,205,205,0.7)"></div>
<div class="a" style="left:485px;top:78px;width:23px;height:22px;background:rgba(150,150,150,0.35)"></div>
<svg class="a" style="left:464px;top:78px" width="46" height="22" viewBox="0 0 46 22">
<path d="M5.5 5 L5.5 15 L9.5 15 M8 12 L11.5 15 L8 18" fill="none" stroke="#222" stroke-width="3.2"/>
<path d="M5.5 5 L5.5 15 L9.5 15 M8 12 L11.5 15 L8 18" fill="none" stroke="#d8d8d8" stroke-width="1.6"/>
<path d="M25.5 2.5 L41.5 2.5 L41.5 19.5 L31 19.5 Q25.5 19 25.5 13 Z" fill="rgba(195,195,195,0.9)" stroke="#2a2a2a" stroke-width="1"/>
</svg>
<div class="a" style="left:512px;top:83.5px;font-size:11px;color:#000;letter-spacing:-0.35px">Sketch1</div>
<!-- top right icons -->
<svg class="a" style="left:780px;top:0" width="161" height="30" viewBox="780 0 161 30">
<circle cx="816" cy="2" r="11" fill="#eef3f7" stroke="#5e5e5e" stroke-width="1.3"/>
<path d="M809.5 4 L822.5 4 L816 9.5 Z" fill="#3a3a3a"/>
<path d="M811 -1 L821 -1 L816 3 Z" fill="#888"/>
<path d="M808.5 10 L804 14.5" stroke="#4a4a4a" stroke-width="3.2"/>
<path d="M802.2 12 L806.4 16.2 L798 23.4 Q795.5 25.2 793.6 23.2 Q792 21.2 794 19 Z" fill="#7db5d9" stroke="#3d6f96" stroke-width="1"/>
<circle cx="860" cy="2.5" r="11.2" fill="#eef4f8" stroke="#5e5e5e" stroke-width="1.3"/>
<path d="M852.5 11 L848 15.5" stroke="#4a4a4a" stroke-width="3.2"/>
<path d="M846.2 13 L850.4 17.2 L842 24.4 Q839.5 26.2 837.6 24.2 Q836 22.2 838 20 Z" fill="#7db5d9" stroke="#3d6f96" stroke-width="1"/>
<path d="M868 0.5 L874.5 0.5 L874.5 8 L871 8" fill="none" stroke="#555" stroke-width="1" stroke-dasharray="2 1.2"/>
<path d="M889 8 L904 -1 L914 -1 Q918 4 914 9 L899 19 Z" fill="#f4f4f4" stroke="#6a6a6a" stroke-width="1"/>
<ellipse cx="894" cy="13.5" rx="6.2" ry="8.2" transform="rotate(-45 894 13.5)" fill="#eaeaea" stroke="#6a6a6a" stroke-width="1"/>
<ellipse cx="894" cy="13.5" rx="3.6" ry="5.2" transform="rotate(-45 894 13.5)" fill="#bcbcbc" stroke="#888" stroke-width="0.6"/>
<path d="M901 9.5 L910 2 L910 6 L920 6 L920 13 L910 13 L910 17 Z" fill="#7db5d9" stroke="#3d6f96" stroke-width="1" stroke-linejoin="round"/>
</svg>

<!-- yellow highlight -->
<svg class="a" style="left:590px;top:420px" width="351" height="50" viewBox="590 420 351 50">
<path d="M649 434.5 Q660 431 700 429.5 Q780 428 860 428 Q905 426 941 427.5 L941 452 Q928 454 915 458 L911 462.5 Q880 466 800 465.5 Q730 465.5 713 464 L700 463 L596 462 L596 440 Z" fill="#f0f000"/>
</svg>
<div class="a" style="left:594px;top:434px;width:317px;height:28px;border:1px solid #4a4a30;background:#e6e600"></div>
<div class="a" style="left:595px;top:435px;width:24px;height:1px;background:#fafae8"></div>
<div class="a" style="left:595px;top:435px;width:1px;height:26px;background:#f4f4c8"></div>
<div class="a" style="left:596px;top:437px;width:280px;height:21px;border:1px solid #a8a800;background:#e1e100"></div>
<div class="a" style="left:600.7px;top:441.5px;font-size:12px;color:#0a0a00;letter-spacing:-0.5px">Size 2</div>
<svg class="a" style="left:860px;top:442px" width="12" height="10"><path d="M2 2.5 L6 6.5 L10 2.5" fill="none" stroke="#6a6a00" stroke-width="1.2"/></svg>
<div class="a" style="left:878px;top:437px;width:29px;height:20.5px;border:1px solid #8a8a00;background:#e8e800"></div>
<div class="a" style="left:895px;top:438px;width:1px;height:19px;background:#a0a000"></div>
<svg class="a" style="left:870px;top:430px" width="45" height="35" viewBox="870 430 45 35">
<rect x="879.5" y="439.5" width="2.8" height="17" fill="#ecec00" stroke="#3a3a00" stroke-width="0.9"/>
<path d="M882.3 444.4 L885 444.4" stroke="#3a3a00" stroke-width="0.9"/>
<path d="M884.2 441 L885.5 439.3 L893 439.3 L894.5 441 L894.5 449.6 L885.7 449.6 L884.2 448 Z" fill="#2e7a10" stroke="#0e2a00" stroke-width="0.9" stroke-linejoin="round"/>
<rect x="885.7" y="441.3" width="8.8" height="8.3" fill="#5aa62a" stroke="#0e2a00" stroke-width="0.8"/>
<path d="M886.5 448.5 L893.5 442" stroke="#7cc040" stroke-width="1"/>
<path d="M897.9 445.2 L903 445.2 L900.45 447.8 Z" fill="#2a2a00"/>
</svg>
<!-- toolbar box -->
<div class="a" style="left:594px;top:470px;width:316px;height:98px;border:1px solid #7a7a7a;background:#f6f6f6;box-shadow:inset 0 0 0 1px #fff"></div>
<svg class="a" style="left:594px;top:470px" width="317" height="98" viewBox="594 470 317 98">
<!-- ROW 1 -->
<!-- 1 open folder green arrow -->
<g transform="translate(603,480)">
<path d="M0.5 4 L0.5 19 L16 19 L20 8.5 L16 8.5 L16 5.5 L7 5.5 L5.5 3.5 L1.5 3.5 Z" fill="#e8e8e8" stroke="#333" stroke-width="1"/>
<path d="M3 10 L20 8.5 L16 19 L0.5 19 Z" fill="#f6f6f6" stroke="#333" stroke-width="1" stroke-linejoin="round"/>
<path d="M9 1 Q14 1 14 6 L14 9" fill="none" stroke="#23a32e" stroke-width="2.4"/>
<path d="M10.5 8 L17.5 8 L14 12 Z" fill="#23a32e"/>
</g>
<!-- 2 flashlight green arrow -->
<g transform="translate(633,480)">
<path d="M1 12 L14 2 Q17 0 18.5 2 Q19.5 4 17 6 L5 17 Q2 18 1 15 Z" fill="#d8d8d8" stroke="#333" stroke-width="1"/>
<ellipse cx="3" cy="14.5" rx="2.2" ry="3" transform="rotate(-40 3 14.5)" fill="#aaa" stroke="#333" stroke-width="0.8"/>
<path d="M8 8 Q12 7 13.5 11 L13.5 13" fill="none" stroke="#23a32e" stroke-width="2.4"/>
<path d="M10 12.5 L17.5 12.5 L13.5 17.5 Z" fill="#23a32e"/>
</g>
<!-- 3 folder w part & arrow -->
<g transform="translate(663,479)">
<path d="M0.5 2 L6 2 L7.5 4 L13 4 L13 19.5 L0.5 19.5 Z" fill="#e6e6e6" stroke="#333" stroke-width="1"/>
<path d="M2.5 6 L17 6 L20 8 L20 19.5 L2.5 19.5 Z" fill="#ededed" stroke="#333" stroke-width="1"/>
<path d="M4.5 9 L12 9 L12 11.5 L9.5 11.5 L9.5 14 L14.5 14 L14.5 17.5 L4.5 17.5 L4.5 14 L7 14 L7 11.5 L4.5 11.5 Z" fill="#f3c51c" stroke="#5a4208" stroke-width="0.9"/>
<path d="M11 0.8 Q16 0.8 16 5 L16 7" fill="none" stroke="#23a32e" stroke-width="2.4"/>
<path d="M12.5 6.5 L19.5 6.5 L16 10.5 Z" fill="#23a32e"/>
<rect x="16" y="13" width="3" height="5" fill="#fff" stroke="#555" stroke-width="0.7"/>
</g>
<!-- 4 yellow folder blue cube pencil -->
<g transform="translate(694,479)">
<path d="M0.5 4 L6 2 L9 3 L15 2 L15 14 L5 15 L0.5 12 Z" fill="#f6e2a0" stroke="#b89a50" stroke-width="0.8"/>
<path d="M6.5 5 L11 3 L15.5 5 L15.5 11 L11 13 L6.5 11 Z" fill="#6fb0da" stroke="#1d5a8a" stroke-width="0.9"/>
<path d="M16 6.5 L19 9.5 L8 20 L4.5 20.5 L5 17 Z" fill="#f5d040" stroke="#333" stroke-width="0.9"/>
<path d="M16 6.5 L19 9.5 L17.5 11 L14.5 8 Z" fill="#e84a4a"/>
</g>
<!-- 5 eye slash grey -->
<g transform="translate(724,481)">
<path d="M1 9 Q9 1 17 9 Q9 17 1 9 Z" fill="none" stroke="#c4c4c4" stroke-width="1.2"/>
<circle cx="9" cy="9" r="2.5" fill="#d4d4d4"/>
<path d="M3 2 L15 16" stroke="#6a6a6a" stroke-width="1.5"/>
</g>
<!-- 6 eye with pale cubes -->
<g transform="translate(753,479)">
<path d="M7 3 L11 1 L15 3 L15 8 L19 10 L19 16 L13 19 L9 17 L9 8 Z" fill="#f3ecc0" stroke="#d4cc9a" stroke-width="0.8"/>
<path d="M0.5 14 Q6 8 11.5 14 Q6 20 0.5 14 Z" fill="#fff" stroke="#222" stroke-width="1.1"/>
<circle cx="6" cy="14" r="2.4" fill="#222"/>
</g>
<!-- 7 down arrow blue cube -->
<g transform="translate(784,479)">
<path d="M3.5 3 L3.5 16" stroke="#111" stroke-width="1.5"/>
<path d="M0.5 13 L6.5 13 L3.5 18.5 Z" fill="#111"/>
<path d="M9 3 L13 1 L17 3 L17 8 L13 10 L9 8 Z" fill="#3a8cc6" stroke="#1d4f7a" stroke-width="0.9"/>
<path d="M9 12 L13 10.5 L17 12 L17 17 L13 19 L9 17 Z" fill="#f4f4f4" stroke="#cfcfcf" stroke-width="0.8"/>
</g>
<!-- 8 paperclip -->
<g transform="translate(814,479)">
<path d="M11.5 17 L3 7 Q1 4 3.5 2 Q6 0.5 8 3 L16 13 Q17.5 15 16 16.5 Q14.5 17.5 13 16 L6 7.5" fill="none" stroke="#222" stroke-width="1.2"/>
</g>
<!-- 9 paperclip with eye -->
<g transform="translate(844,479)">
<path d="M11.5 17 L3 7 Q1 4 3.5 2 Q6 0.5 8 3 L16 13 Q17.5 15 16 16.5 Q14.5 17.5 13 16 L6 7.5" fill="none" stroke="#222" stroke-width="1.2"/>
<path d="M0.5 14 Q6 8 11.5 14 Q6 20 0.5 14 Z" fill="#fff" stroke="#222" stroke-width="1.1"/>
<circle cx="6" cy="14" r="2.4" fill="#222"/>
</g>
<!-- 10 list window -->
<g transform="translate(873,479)">
<rect x="0.5" y="0.5" width="18" height="18.5" fill="#f4f4f4" stroke="#222" stroke-width="1"/>
<rect x="1" y="1" width="17" height="3" fill="#3a86c4"/>
<rect x="3" y="6.5" width="4" height="2.5" fill="#3a86c4" stroke="#1d4f7a" stroke-width="0.6"/>
<rect x="3" y="10.5" width="4" height="2.5" fill="#3a86c4" stroke="#1d4f7a" stroke-width="0.6"/>
<rect x="3" y="14.5" width="4" height="2.5" fill="#3a86c4" stroke="#1d4f7a" stroke-width="0.6"/>
<path d="M9 7.7 L16 7.7 M9 11.7 L16 11.7 M9 15.7 L16 15.7" stroke="#333" stroke-width="1"/>
</g>
<!-- ROW 2 -->
<g transform="translate(603,509)">
<path d="M8 1.5 L13 0.5 L18 2.5 L18 17 L12 19.5 L8 17 Z" fill="#f0f0f0" stroke="#555" stroke-width="0.8"/>
<path d="M1 6 L7 3.5 L13 6 L13 14 L7 17 L1 14 Z" fill="#4c9ad0" stroke="#1d4f7a" stroke-width="0.9"/>
<path d="M1 6 L7 3.5 L13 6 L7 8.5 Z" fill="#a7d3ee"/>
<path d="M16 6 L19.5 9.5 L9 19.5 L5 20 L5.5 16.5 Z" fill="#f5d040" stroke="#333" stroke-width="0.9"/>
<path d="M16 6 L19.5 9.5 L18 11 L14.5 7.5 Z" fill="#e84a4a"/>
</g>
<g transform="translate(633,509)">
<path d="M1 1 L1 19 M5 1 L5 19 M9 1 L9 19 M13 1 L13 19 M17 1 L17 19 M0 3 L20 3 M0 7 L20 7 M0 11 L20 11 M0 15 L20 15" stroke="#c8c8c8" stroke-width="0.7"/>
<path d="M2 1.5 L2 14 Q2 18.5 6.5 18.5 L19 18.5" fill="none" stroke="#3a86c4" stroke-width="1.8"/>
<path d="M2 1.5 L16 1.5" stroke="#3a86c4" stroke-width="1.6"/>
<path d="M15 4 L18.5 7.5 L8 17.5 L4 18 L4.5 14.5 Z" fill="#f5d040" stroke="#333" stroke-width="0.9"/>
<path d="M15 4 L18.5 7.5 L17 9 L13.5 5.5 Z" fill="#e84a4a"/>
</g>
<g transform="translate(664,509)">
<circle cx="8.5" cy="8.5" r="8" fill="#2fa83a"/>
<path d="M8.5 8.5 L0.5 8.5 A8 8 0 0 1 8.5 0.5 Z" fill="#3a7fd0"/>
<path d="M8.5 8.5 L8.5 0.5 A8 8 0 0 1 16.5 8.5 Z" fill="#d82a2a"/>
<path d="M8.5 8.5 L16.5 8.5 A8 8 0 0 1 8.5 16.5 Z" fill="#e8c020"/>
<path d="M16 7 L19.5 10.5 L9 20 L5 20.5 L5.5 17 Z" fill="#f5d040" stroke="#333" stroke-width="0.9"/>
<path d="M16 7 L19.5 10.5 L18 12 L14.5 8.5 Z" fill="#e84a4a"/>
</g>
<path d="M692 517 L697.5 517 L694.75 520 Z" fill="#333"/>
<g transform="translate(708,509)">
<circle cx="7" cy="7" r="6.5" fill="#2fa83a"/>
<path d="M7 7 L0.5 7 A6.5 6.5 0 0 1 7 0.5 Z" fill="#3a7fd0"/>
<path d="M7 7 L7 0.5 A6.5 6.5 0 0 1 13.5 7 Z" fill="#d82a2a"/>
<circle cx="12.5" cy="11.5" r="6.5" fill="#2fa83a"/>
<path d="M12.5 11.5 L6 11.5 A6.5 6.5 0 0 1 12.5 5 Z" fill="#3a7fd0"/>
<path d="M12.5 11.5 L12.5 5 A6.5 6.5 0 0 1 19 11.5 Z" fill="#d82a2a"/>
<path d="M12.5 11.5 L19 11.5 A6.5 6.5 0 0 1 12.5 18 Z" fill="#e8c020"/>
<path d="M0.5 12 L5 16.5" stroke="#111" stroke-width="1.4"/>
<path d="M2 18.5 L7 18.5 L7 13.5 Z" fill="#111"/>
</g>
<g transform="translate(737,509)">
<path d="M0.5 3 Q0.5 0.8 3 0.8 L13 0.8 Q15.5 0.8 15.5 3 L15.5 17.5 L0.5 17.5 Z" fill="#f0f0f0" stroke="#444" stroke-width="1"/>
<circle cx="14" cy="13" r="6" fill="#2fa83a"/>
<path d="M14 13 L8 13 A6 6 0 0 1 14 7 Z" fill="#3a7fd0"/>
<path d="M14 13 L14 7 A6 6 0 0 1 20 13 Z" fill="#d82a2a"/>
<path d="M14 13 L20 13 A6 6 0 0 1 14 19 Z" fill="#e8c020"/>
</g>
<!-- ROW 3 -->
<g transform="translate(603,539)">
<rect x="6.5" y="0.5" width="11" height="11" fill="#f0f0f0" stroke="#333" stroke-width="1"/>
<rect x="0.5" y="5.5" width="11" height="11" fill="#f7f7f7" stroke="#333" stroke-width="1"/>
<path d="M7.5 7 L7.5 19 L10 16.5 L12.5 20 L14 19 L11.8 15.8 L15 15.5 Z" fill="#fff" stroke="#333" stroke-width="0.8"/>
</g>
<g transform="translate(633,539)">
<circle cx="12" cy="7.5" r="6.5" fill="#f2f2f2" stroke="#444" stroke-width="1.2"/>
<path d="M9 6 L15 6 M9 9 L15 9" stroke="#333" stroke-width="1.3"/>
<path d="M7.5 12 L1.5 18" stroke="#3a86c4" stroke-width="3"/>
</g>
<g transform="translate(664,539)">
<rect x="0.5" y="0.5" width="18" height="18.5" fill="#f2f2f2" stroke="#222" stroke-width="1"/>
<rect x="1" y="1" width="17" height="2.5" fill="#3a86c4"/>
<g transform="translate(3.5,5) scale(0.72)">
<path d="M3.7 1.2 L12.2 0.8 L12.6 5.8 L16.5 7.4 L16.5 13.8 L11.4 16.6 L0.4 8.8 L0.4 4.4 L2.2 3.5 L3.6 4.6 Z" fill="#f6c81e" stroke="#3a2a00" stroke-width="1.3" stroke-linejoin="round"/>
<path d="M7.6 2.4 L12.2 0.8 L12.6 5.8 L7.8 7.3 Z M11.4 9.4 L16.5 7.4 L16.5 13.8 L11.4 16.6 Z" fill="#fde35c"/>
</g>
</g>
<g transform="translate(694,539)">
<path d="M1 16 L9 11.5 L18 16 L9 20 Z" fill="#4f9ccf" stroke="#1d5a8a" stroke-width="0.8"/>
<path d="M9 15.5 L9 3" stroke="#111" stroke-width="1.5"/>
<path d="M6 4.5 L12 4.5 L9 0.5 Z" fill="#111"/>
</g>
<g transform="translate(724,539)">
<path d="M1 6 L7 2 L18 4.5 L18 16 L12 19.5 L1 16 Z" fill="#f2f2f2" stroke="#444" stroke-width="1"/>
<path d="M7 2 L18 4.5 L18 9 L12 12 Q9 7 7 2 Z" fill="#5aa0d0"/>
<path d="M12 12 L12 19.5" stroke="#666" stroke-width="0.8"/>
</g>
<g transform="translate(754,539)">
<path d="M1 8 L9 2 L17 6 L17 15 L9 19.5 L1 15 Z" fill="#f2f2f2" stroke="#444" stroke-width="1"/>
<path d="M1 8 L9 2 L17 6 L9 11 Z" fill="#4f9ccf" stroke="#1d5a8a" stroke-width="0.8"/>
<path d="M9 11 L9 19.5" stroke="#666" stroke-width="0.8"/>
</g>
</svg>

</body></html>
